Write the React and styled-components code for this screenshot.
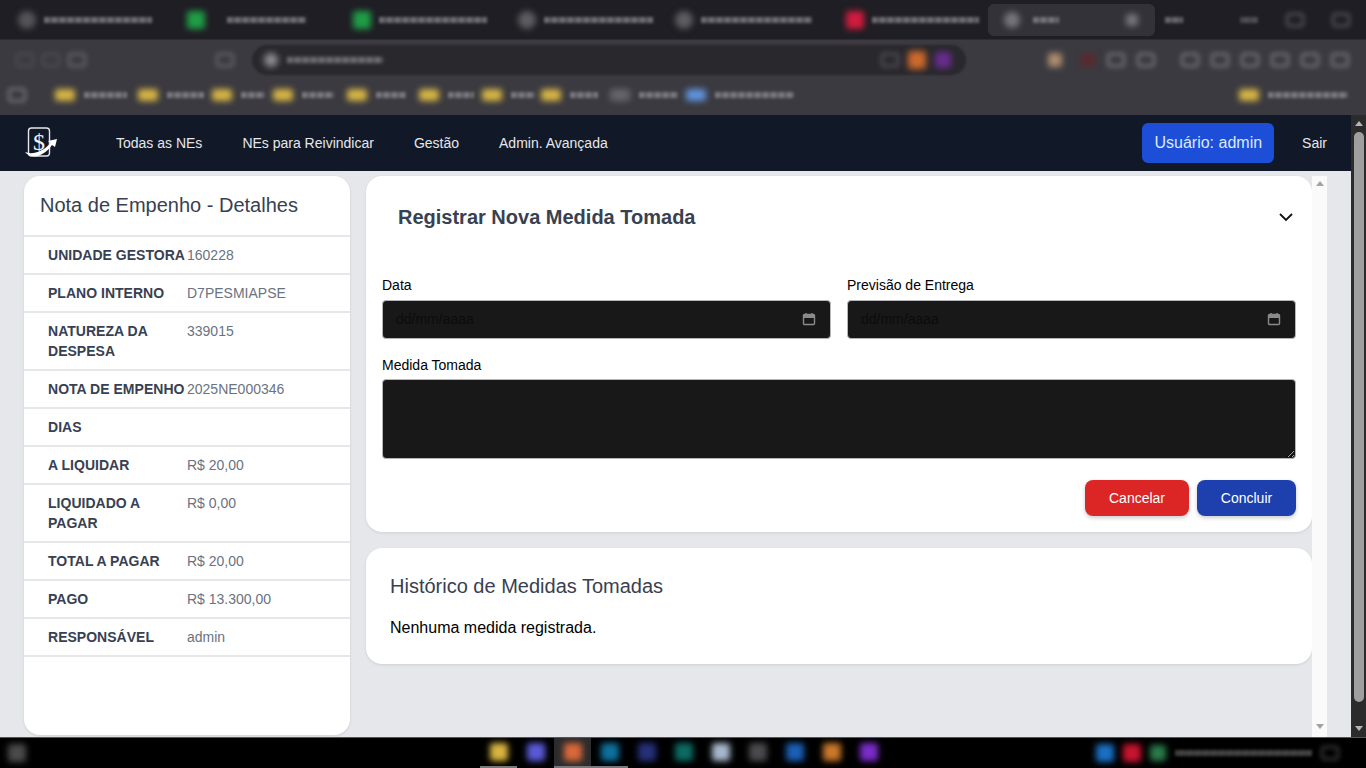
import React from 'react'
import styled, { createGlobalStyle } from 'styled-components'

const GlobalStyle = createGlobalStyle`
  html, body { margin: 0; padding: 0; height: 100%; overflow: hidden; }
  body { font-family: "Liberation Sans", Arial, sans-serif; background: #e5e7eb; }
  * { box-sizing: border-box; }
`

const Screen = styled.div`
  width: 1366px;
  height: 768px;
  display: flex;
  flex-direction: column;
  overflow: hidden;
`

/* browser chrome, blurred out in the picture */
const Chrome = styled.div`
  height: 115px;
  flex: none;
  overflow: hidden;
  background: #3b3a40;
`

const TabRow = styled.div`
  height: 40px;
  display: flex;
  align-items: center;
  padding-left: 18px;
  background: #1f1e24;
  border-bottom: 1px solid #2d2c32;
`

const Tab = styled.div`
  width: ${p => p.$w}px;
  height: 32px;
  display: flex;
  align-items: center;
  flex: none;
  padding-left: ${p => p.$pad || 0}px;
  gap: ${p => p.$gap || 8}px;
  background: ${p => p.$active ? '#333238' : 'transparent'};
  border-radius: 6px;
`

const Blob = styled.span`
  display: block;
  flex: none;
  width: ${p => p.$w || p.$size || 16}px;
  height: ${p => p.$size || 16}px;
  margin-right: ${p => p.$mr || 0}px;
  border-radius: ${p => p.$round ? '50%' : '3px'};
  background: ${p => p.$color};
  filter: blur(3px);
  opacity: ${p => p.$o || 1};
`

const TextBar = styled.span`
  display: block;
  flex: none;
  width: ${p => p.$w}px;
  height: 6px;
  background: repeating-linear-gradient(90deg, ${p => p.$color || '#a5a4aa'} 0 5px, #76757b 5px 8px);
  opacity: .6;
  filter: blur(1.8px);
`

const ToolRow = styled.div`
  height: 40px;
  display: flex;
  align-items: center;
`

const ToolGroup = styled.div`
  width: ${p => p.$w}px;
  flex: none;
  display: flex;
  align-items: center;
  padding-left: ${p => p.$pad || 0}px;
  gap: ${p => p.$gap || 0}px;
`

const UrlBar = styled.div`
  width: 714px;
  height: 30px;
  flex: none;
  display: flex;
  align-items: center;
  padding-left: 12px;
  gap: 9px;
  border-radius: 15px;
  background: #29282d;
  filter: blur(1px);
`

const UrlSpacer = styled.div`
  flex: 1;
`

const ToolIcon = styled.span`
  display: block;
  flex: none;
  width: 18px;
  height: 14px;
  margin-right: ${p => p.$mr || 0}px;
  border: 2px solid ${p => p.$color || '#8d8c92'};
  border-radius: 4px;
  filter: blur(2.4px);
  opacity: .9;
`

const BookmarkRow = styled.div`
  height: 35px;
  display: flex;
  align-items: center;
  padding: 0 0 5px 8px;
`

const Bookmark = styled.div`
  width: ${p => p.$w}px;
  flex: none;
  display: flex;
  align-items: center;
  gap: 9px;
`

/* middle of the window */
const Viewport = styled.div`
  flex: 1;
  min-height: 0;
  display: flex;
`

const Page = styled.div`
  flex: 1;
  min-width: 0;
  display: flex;
  flex-direction: column;
  background: #e5e7eb;
`

const Nav = styled.nav`
  height: 56px;
  flex: none;
  display: flex;
  align-items: center;
  padding: 0 24px;
  background: #111827;
`

const Logo = styled.svg`
  width: 34px;
  height: 34px;
  flex: none;
`

const NavLinks = styled.div`
  display: flex;
  gap: 40px;
  margin-left: 58px;
`

const NavLink = styled.a`
  font-size: 14px;
  line-height: 20px;
  color: #e5e7eb;
  text-decoration: none;
`

const UserBadge = styled.div`
  margin-left: auto;
  height: 40px;
  padding: 0 12px;
  display: flex;
  align-items: center;
  font-size: 16px;
  color: #dbeafe;
  background: #1d4ed8;
  border-radius: 6px;
`

const Logout = styled(NavLink)`
  margin-left: 28px;
`

const Body = styled.div`
  flex: 1;
  min-height: 0;
  display: flex;
  padding: 5px 24px 0;
  gap: 16px;
`

const Sidebar = styled.aside`
  width: 326px;
  height: 559px;
  flex: none;
  background: #fff;
  border-radius: 16px;
  box-shadow: 0 1px 3px rgba(0, 0, 0, .1);
  overflow: hidden;
`

const SidebarTitle = styled.h2`
  margin: 0;
  height: 61px;
  padding: 15px 16px 0;
  font-size: 20px;
  line-height: 28px;
  font-weight: 400;
  color: #374151;
  border-bottom: 2px solid #e5e7eb;
`

const DetailRow = styled.div`
  display: grid;
  grid-template-columns: 139px 1fr;
  padding: 8px 24px;
  font-size: 14px;
  line-height: 20px;
  border-bottom: 2px solid #e5e7eb;
`

const DetailLabel = styled.span`
  font-weight: 700;
  letter-spacing: .02px;
  color: #374151;
  text-transform: uppercase;
`

const DetailValue = styled.span`
  color: #6b7280;
`

const Scroller = styled.div`
  flex: 1;
  min-width: 0;
  display: flex;
`

const Column = styled.div`
  flex: 1;
  min-width: 0;
  display: flex;
  flex-direction: column;
  gap: 16px;
`

const Card = styled.section`
  background: #fff;
  border-radius: 16px;
  box-shadow: 0 1px 3px rgba(0, 0, 0, .1);
`

const FormCard = styled(Card)`
  height: 356px;
  padding: 16px;
`

const CollapseHeader = styled.div`
  height: 50px;
  display: flex;
  align-items: center;
  justify-content: space-between;
  padding: 0 2px 0 16px;
`

const CollapseTitle = styled.h3`
  margin: 0;
  font-size: 20px;
  line-height: 28px;
  font-weight: 700;
  color: #374151;
`

const FormGrid = styled.div`
  display: grid;
  grid-template-columns: 1fr 1fr;
  column-gap: 16px;
  row-gap: 16px;
  margin-top: 33px;
`

const Field = styled.div`
  display: flex;
  flex-direction: column;
  grid-column: ${p => p.$wide ? '1 / -1' : 'auto'};
  gap: 5px;
`

const FieldLabel = styled.label`
  font-size: 14px;
  line-height: 20px;
  color: #000;
`

const DateBox = styled.div`
  height: 39px;
  display: flex;
  align-items: center;
  justify-content: space-between;
  padding: 0 14px 2px 13px;
  background: #181818;
  border: 1px solid #b4b6ba;
  border-radius: 4px;
  font-size: 14px;
  color: #0c0c0c;
`

const NoteBox = styled.textarea`
  display: block;
  width: 100%;
  height: 80px;
  margin-top: -1px;
  padding: 8px 12px;
  color: #fff;
  background: #181818;
  border: 1px solid #b4b6ba;
  border-radius: 4px;
  color-scheme: dark;
  font: 14px "Liberation Sans", Arial, sans-serif;
  resize: vertical;
  outline: none;
`

const Actions = styled.div`
  display: flex;
  justify-content: flex-end;
  gap: 8px;
  margin-top: 21px;
`

const ActionButton = styled.button`
  height: 36px;
  width: ${p => p.$w}px;
  border: 0;
  border-radius: 8px;
  font: 14px "Liberation Sans", Arial, sans-serif;
  color: #fff;
  background: ${p => p.$color};
  box-shadow: 0 2px 4px rgba(0, 0, 0, .2);
`

const HistoryCard = styled(Card)`
  height: 116px;
  padding: 24px;
`

const HistoryTitle = styled.h3`
  margin: 0;
  font-size: 20px;
  line-height: 28px;
  font-weight: 400;
  color: #374151;
`

const HistoryEmpty = styled.p`
  margin: 16px 0 0;
  font-size: 16px;
  line-height: 24px;
  color: #000;
`

const Track = styled.div`
  width: 15px;
  flex: none;
  display: flex;
  flex-direction: column;
  align-items: center;
  justify-content: space-between;
  background: ${p => p.$dark ? '#2b2b2b' : '#fafafa'};
  padding: ${p => p.$dark ? '6px 0 6px' : '5px 0 8px'};
`

const TrackBody = styled.div`
  width: 15px;
  flex: 1;
  display: flex;
  justify-content: center;
  padding: 6px 0 24px;
`

const Thumb = styled.div`
  width: 10px;
  height: 100%;
  background: #9f9f9f;
  border-radius: 5px;
`

const Arrow = styled.span`
  display: block;
  width: 0;
  height: 0;
  border-left: 4px solid transparent;
  border-right: 4px solid transparent;
  border-${p => p.$down ? 'top' : 'bottom'}: 5px solid ${p => p.$dark ? '#b5b5b5' : '#a3a3a3'};
`

/* taskbar */
const Taskbar = styled.div`
  height: 31px;
  flex: none;
  display: flex;
  align-items: center;
  background: #000;
  border-top: 1px solid #55565a;
  padding-left: 8px;
`

const TaskGroup = styled.div`
  width: ${p => p.$w}px;
  flex: none;
  display: flex;
  align-items: center;
  gap: ${p => p.$gap || 0}px;
`

const TaskApp = styled.div`
  width: 37px;
  height: 30px;
  flex: none;
  display: flex;
  align-items: center;
  justify-content: center;
  background: ${p => p.$active ? '#2c2c2c' : 'transparent'};
  border-bottom: 2px solid ${p => p.$running ? '#77787c' : 'transparent'};
`

const tabs = [
  { color: '#55555a', text: 108, w: 169 },
  { color: '#1f9d46', text: 79, w: 166, gap: 22 },
  { color: '#1f9d46', text: 108, w: 165 },
  { color: '#5d5d62', text: 109, w: 157 },
  { color: '#5d5d62', text: 111, w: 171 },
  { color: '#d21b3e', text: 107, w: 142 },
]

const bookmarks = [
  { w: 83, text: 43 },
  { w: 74, text: 37 },
  { w: 61, text: 24 },
  { w: 74, text: 32 },
  { w: 72, text: 30 },
  { w: 63, text: 26 },
  { w: 59, text: 24 },
  { w: 69, text: 28 },
  { w: 76, text: 39, color: '#66656b' },
  { w: 553, text: 79, color: '#5f93dc' },
]

const details = [
  ['Unidade Gestora', '160228'],
  ['Plano Interno', 'D7PESMIAPSE'],
  ['Natureza da Despesa', '339015'],
  ['Nota de Empenho', '2025NE000346'],
  ['Dias', ''],
  ['A Liquidar', 'R$ 20,00'],
  ['Liquidado a Pagar', 'R$ 0,00'],
  ['Total a Pagar', 'R$ 20,00'],
  ['Pago', 'R$ 13.300,00'],
  ['Responsável', 'admin'],
]

const taskIcons = [
  { color: '#d9b441', running: true },
  { color: '#5a5ad8' },
  { color: '#d9683a', active: true, running: true },
  { color: '#0e6f9e', running: true },
  { color: '#26307a' },
  { color: '#0c6b63' },
  { color: '#a8b8cc' },
  { color: '#4a4a4e' },
  { color: '#1a5fb4' },
  { color: '#c9772a' },
  { color: '#7a2cc9' },
]

const CalendarIcon = () => (
  <svg width="14" height="14" viewBox="0 0 14 14" fill="none">
    <rect x="1.5" y="2.5" width="11" height="10" rx="1" stroke="#8a8a8a" strokeWidth="1.4" />
    <path d="M1.5 4.5h11" stroke="#8a8a8a" strokeWidth="3" />
    <path d="M4 1v2M10 1v2" stroke="#8a8a8a" strokeWidth="1.4" />
  </svg>
)

const Chevron = () => (
  <svg width="16" height="16" viewBox="0 0 16 16" fill="none">
    <path d="M2 5l6 6 6-6" stroke="#111" strokeWidth="1.8" />
  </svg>
)

const App = () => (
  <Screen>
    <GlobalStyle />
    <Chrome>
      <TabRow>
        {tabs.map((t, i) => (
          <Tab key={i} $w={t.w} $gap={t.gap}>
            <Blob $color={t.color} $size={18} $round={t.color === '#55555a' || t.color === '#5d5d62'} />
            <TextBar $w={t.text} />
          </Tab>
        ))}
        <Tab $w={167} $active $pad={16} $gap={13}>
          <Blob $color="#77767c" $round />
          <TextBar $w={26} />
          <UrlSpacer />
          <Blob $color="#77767c" $size={12} />
          <Blob $color="transparent" $size={4} />
        </Tab>
        <ToolGroup $w={85} $pad={10}>
          <TextBar $w={18} $color="#9a999f" />
        </ToolGroup>
        <ToolGroup $w={46}>
          <TextBar $w={18} $color="#66656b" />
        </ToolGroup>
        <ToolIcon $mr={28} $color="#6a696f" />
        <ToolIcon $color="#6a696f" />
      </TabRow>
      <ToolRow>
        <ToolGroup $w={252} $pad={16} $gap={8}>
          <ToolIcon $color="#55545a" />
          <ToolIcon $color="#55545a" />
          <ToolIcon $color="#77767c" $mr={122} />
          <ToolIcon $color="#77767c" />
        </ToolGroup>
        <UrlBar>
          <Blob $color="#8f8e94" $round $size={14} />
          <TextBar $w={96} />
          <UrlSpacer />
          <ToolIcon $color="#66656b" />
          <Blob $color="#cf6a2c" $size={18} />
          <Blob $color="#6a2c8f" $size={16} />
          <Blob $color="transparent" $size={6} />
        </UrlBar>
        <ToolGroup $w={400} $pad={82} $gap={12}>
          <Blob $color="#c8a27a" $size={14} $o={.8} $mr={7} />
          <Blob $color="#5a2a2e" $size={14} />
          <ToolIcon />
          <ToolIcon $mr={14} />
          <ToolIcon />
          <ToolIcon />
          <ToolIcon />
          <ToolIcon />
          <ToolIcon />
          <ToolIcon />
        </ToolGroup>
      </ToolRow>
      <BookmarkRow>
        <ToolIcon $mr={29} />
        {bookmarks.map((b, i) => (
          <Bookmark key={i} $w={b.w}>
            <Blob $color={b.color || '#d6b545'} $size={12} $w={20} />
            <TextBar $w={b.text} />
          </Bookmark>
        ))}
        <Bookmark $w={110}>
          <Blob $color="#d6b545" $size={12} $w={20} />
          <TextBar $w={80} />
        </Bookmark>
      </BookmarkRow>
    </Chrome>

    <Viewport>
      <Page>
        <Nav>
          <Logo viewBox="0 0 34 34" fill="none">
            <rect x="4.5" y="2" width="21" height="28" rx="3" stroke="#e5e7eb" strokeWidth="1.4" />
            <text x="15" y="24" textAnchor="middle" fontFamily="Liberation Serif, serif" fontSize="24" fill="#f3f4f6">$</text>
            <path d="M1 26C6 33 19 32 28 19L31 21L33 13L24 15L26.5 17C19 26 8 29 1 26Z" fill="#fff" />
          </Logo>
          <NavLinks>
            <NavLink>Todas as NEs</NavLink>
            <NavLink>NEs para Reivindicar</NavLink>
            <NavLink>Gestão</NavLink>
            <NavLink>Admin. Avançada</NavLink>
          </NavLinks>
          <UserBadge>Usuário: admin</UserBadge>
          <Logout>Sair</Logout>
        </Nav>
        <Body>
          <Sidebar>
            <SidebarTitle>Nota de Empenho - Detalhes</SidebarTitle>
            {details.map(([label, value]) => (
              <DetailRow key={label}>
                <DetailLabel>{label}</DetailLabel>
                <DetailValue>{value}</DetailValue>
              </DetailRow>
            ))}
          </Sidebar>
          <Scroller>
            <Column>
              <FormCard>
                <CollapseHeader>
                  <CollapseTitle>Registrar Nova Medida Tomada</CollapseTitle>
                  <Chevron />
                </CollapseHeader>
                <FormGrid>
                  <Field>
                    <FieldLabel>Data</FieldLabel>
                    <DateBox>dd/mm/aaaa<CalendarIcon /></DateBox>
                  </Field>
                  <Field>
                    <FieldLabel>Previsão de Entrega</FieldLabel>
                    <DateBox>dd/mm/aaaa<CalendarIcon /></DateBox>
                  </Field>
                  <Field $wide>
                    <FieldLabel>Medida Tomada</FieldLabel>
                    <NoteBox />
                  </Field>
                </FormGrid>
                <Actions>
                  <ActionButton $w={104} $color="#dc2626">Cancelar</ActionButton>
                  <ActionButton $w={99} $color="#1e40af">Concluir</ActionButton>
                </Actions>
              </FormCard>
              <HistoryCard>
                <HistoryTitle>Histórico de Medidas Tomadas</HistoryTitle>
                <HistoryEmpty>Nenhuma medida registrada.</HistoryEmpty>
              </HistoryCard>
            </Column>
            <Track>
              <Arrow />
              <Arrow $down />
            </Track>
          </Scroller>
        </Body>
      </Page>
      <Track $dark>
        <Arrow $dark />
        <TrackBody>
          <Thumb />
        </TrackBody>
        <Arrow $dark $down />
      </Track>
    </Viewport>

    <Taskbar>
      <TaskGroup $w={472}>
        <Blob $color="#4a4a4a" $size={18} />
      </TaskGroup>
      <TaskGroup $w={616}>
        {taskIcons.map((t, i) => (
          <TaskApp key={i} $active={t.active} $running={t.running}>
            <Blob $color={t.color} $size={18} />
          </TaskApp>
        ))}
      </TaskGroup>
      <TaskGroup $w={270} $gap={9}>
        <Blob $color="#1a6fc4" $size={18} />
        <Blob $color="#c8142e" $size={18} />
        <Blob $color="#2a7a4a" $size={16} />
        <TextBar $w={137} $color="#6a6a6a" />
        <ToolIcon $color="#555" />
      </TaskGroup>
    </Taskbar>
  </Screen>
)

export default App
